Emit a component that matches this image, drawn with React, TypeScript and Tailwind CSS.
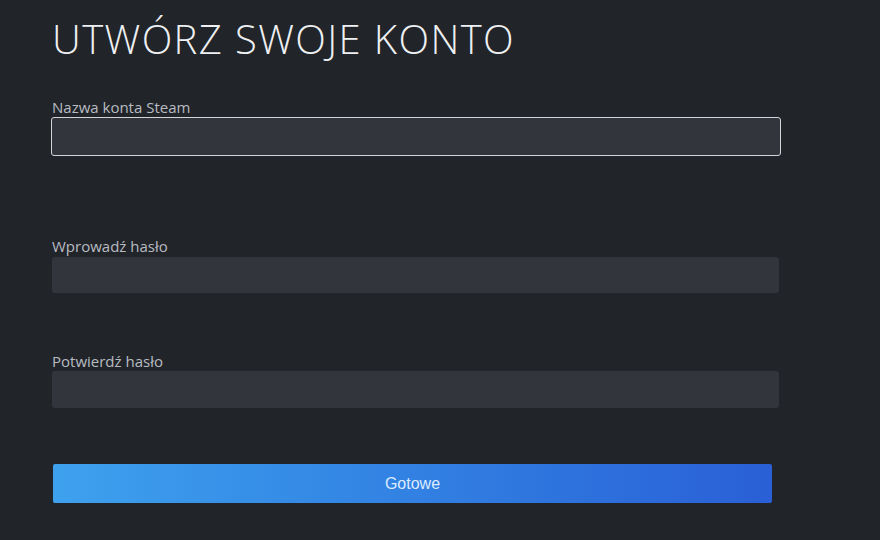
export default function App() {
  return (
    <div className="w-[880px] h-[540px] bg-[#212429] overflow-hidden font-['Open_Sans',sans-serif]">
      <div className="pl-[52px] pt-[15px] w-[780px]">
        {/* Title */}
        <h1 className="text-[40px] leading-[48px] font-light tracking-[0.035em] text-[#eef0f2] uppercase">
          Utwórz swoje konto
        </h1>

        {/* Account name */}
        <div className="mt-[35px]">
          <label className="block text-[15px] leading-[18px] text-[#b8bcc2]">
            Nazwa konta Steam
          </label>
          <div className="mt-[1px] h-[39px] rounded-[3px] bg-[#32353c] border border-[#d2d4d8] -ml-[1px] w-[730px]" />
        </div>

        {/* Password */}
        <div className="mt-[81px]">
          <label className="block text-[15px] leading-[18px] text-[#b8bcc2]">
            Wprowadź hasło
          </label>
          <div className="mt-[2px] h-[36px] rounded-[3px] bg-[#32353c] w-[727px]" />
        </div>

        {/* Confirm password */}
        <div className="mt-[59px]">
          <label className="block text-[15px] leading-[18px] text-[#b8bcc2]">
            Potwierdź hasło
          </label>
          <div className="mt-[1px] h-[37px] rounded-[3px] bg-[#32353c] w-[727px]" />
        </div>

        {/* Submit */}
        <button className="mt-[56px] ml-[1px] w-[719px] h-[39px] rounded-[2px] bg-gradient-to-r from-[#3ea1ee] to-[#2a5fd6] text-[#dcebff] text-[16px] font-['Liberation_Sans',sans-serif] flex items-center justify-center">
          Gotowe
        </button>
      </div>
    </div>
  );
}
